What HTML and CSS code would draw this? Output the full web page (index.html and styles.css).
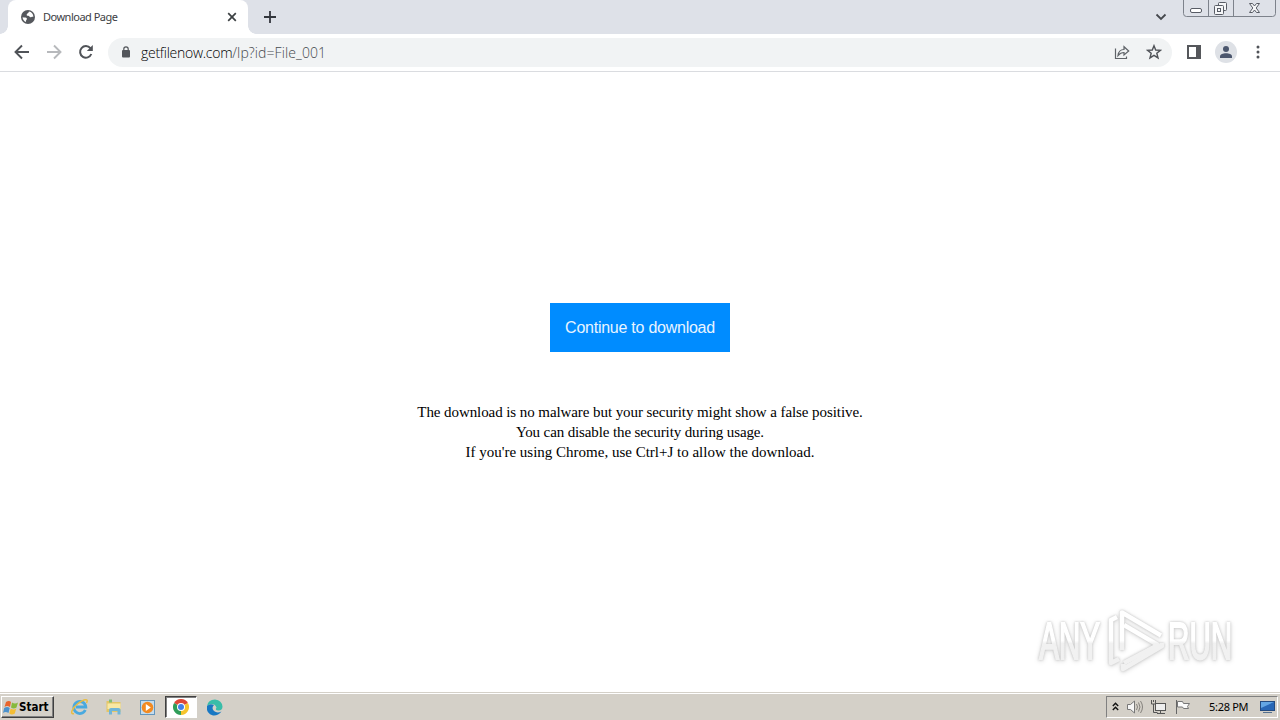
FILE: index.html
```
<!DOCTYPE html>
<html lang="en">
<head>
    <meta charset="UTF-8">
    <meta name="viewport" content="width=device-width, initial-scale=1.0">
    <title>Download Page</title>
    <link rel="stylesheet" href="styles.css">
</head>
<body>
    <!-- tabs -->
    <div class="tabstrip">
        <div class="tab">
            <svg class="globe" width="14" height="14" viewBox="0 0 14 14">
                <circle cx="7" cy="7" r="7" fill="#55585d"/>
                <path d="M8 1.6C7.5 3.5 6.5 3.2 5.8 4.2c-.4 1 .2 1.5 1.4 1.6 1.500 0 1 1.500 2.400 1.500.8 0 1.200-.9 2.800-.6C12.300 4 10.500 2 8 1.600zM1.600 7.200c1.900.3 3.800-.1 4.300 1.400.3 1.300-1.100 1.200-1 3.300C3 11.200 1.600 9.300 1.600 7.200z" fill="#fff"/>
            </svg>
            <span class="tab-title">Download Page</span>
            <svg class="tab-close" width="10" height="10" viewBox="0 0 10 10"><path d="M1.200 1.200l7.600 7.600M8.800 1.200L1.200 8.800" stroke="#3c4043" stroke-width="1.700"/></svg>
        </div>
        <svg class="new-tab" width="12" height="12" viewBox="0 0 12 12"><path d="M6 0v12M0 6h12" stroke="#33363d" stroke-width="1.800"/></svg>
        <svg class="tab-search" width="12" height="8" viewBox="0 0 12 8"><path d="M1.500 1.500L6 6l4.500-4.500" fill="none" stroke="#45484d" stroke-width="1.800"/></svg>
        <svg class="window-buttons" width="94" height="18" viewBox="0 0 94 18">
            <path d="M.5 0v13.500q0 3 3 3h86q3 0 3-3V0M25.500 0v16.500M50.500 0v16.500" fill="none" stroke="#7d828b"/>
            <rect x="7.500" y="8.500" width="11" height="4" rx="1.500" fill="#fff" stroke="#585c65"/>
            <g fill="#f5f6f8" stroke="#585c65">
                <rect x="35.500" y="2.500" width="8" height="8" rx="1"/>
                <rect x="31.500" y="5.500" width="9" height="9" rx="1"/>
                <rect x="34.500" y="8.500" width="3" height="3"/>
                <path d="M66.500 3.500h3l2 2.500 2-2.500h3l-3.300 4.500 3.300 4.500h-3l-2-2.500-2 2.500h-3L69.800 8z"/>
            </g>
        </svg>
    </div>

    <!-- toolbar -->
    <div class="toolbar">
        <svg class="nav-icon" width="16" height="16" viewBox="0 0 16 16"><path d="M15 8H2M8 1.500L1.500 8 8 14.500" fill="none" stroke="#505358" stroke-width="1.900"/></svg>
        <svg class="nav-icon" width="16" height="16" viewBox="0 0 16 16"><path d="M1 8h13M8 1.500L14.500 8 8 14.500" fill="none" stroke="#b7b9bc" stroke-width="1.900"/></svg>
        <svg class="nav-icon" width="16" height="16" viewBox="0 0 16 16"><path d="M13.300 10A5.800 5.800 0 1 1 12.400 4.200L13.500 5.500" fill="none" stroke="#505358" stroke-width="2"/><path d="M14.800 1v6h-6z" fill="#505358"/></svg>
        <div class="omnibox">
            <svg class="lock" width="8" height="12" viewBox="0 0 8 12"><rect x="0" y="4" width="8" height="7.500" rx="1" fill="#53565b"/><path d="M1.800 5V3a2.200 2.200 0 0 1 4.400 0V5" fill="none" stroke="#53565b" stroke-width="1.200"/></svg>
            <span class="url">getfilenow.com<span class="url-path">/lp?id=File_001</span></span>
            <svg class="share" width="16" height="15" viewBox="0 0 16 15"><path d="M1.500 3.500v10h11V11.500M4 10.500c.5-4 2.500-6 6-6V1.700l4.700 4.300-4.700 4V7.500C7.500 7.500 5.500 8.700 4 10.500z" fill="none" stroke="#5f6368" stroke-width="1.200"/></svg>
            <svg class="star" width="16" height="16" viewBox="0 0 16 16"><path d="M8 1.700l1.700 4.300 4.700.3-3.600 3 1.200 4.600-4-2.600-4 2.600 1.200-4.600-3.600-3 4.700-.3z" fill="none" stroke="#505358" stroke-width="1.400"/></svg>
        </div>
        <svg class="side-panel" width="14" height="14" viewBox="0 0 14 14"><path d="M0 0h14v14H0zM2 2v10h7V2z" fill="#55575b" fill-rule="evenodd"/></svg>
        <svg class="profile" width="22" height="22" viewBox="0 0 22 22"><circle cx="11" cy="11" r="11" fill="#dee1e6"/><circle cx="11" cy="8" r="3" fill="#4b566d"/><path d="M5 17v-1.500c0-2 3-3.200 6-3.200s6 1.200 6 3.200V17z" fill="#4b566d"/></svg>
        <svg class="menu" width="4" height="14" viewBox="0 0 4 14"><g fill="#505358"><circle cx="2" cy="2" r="1.500"/><circle cx="2" cy="7" r="1.500"/><circle cx="2" cy="12" r="1.500"/></g></svg>
    </div>

    <div class="page">
        <a class="download-btn" href="#">Continue to download</a>
        <p class="note">
            <span class="line-1">The download is no malware but your security might show a false positive.</span><br>
            <span class="line-2">You can disable the security during usage.</span><br>
            <span class="line-3">If you're using Chrome, use Ctrl+J to allow the download.</span>
        </p>
    </div>

    <!-- watermark over the page -->
    <svg class="watermark" width="220" height="76" viewBox="0 0 220 76">
        <defs>
            <linearGradient id="fade" gradientUnits="userSpaceOnUse" x1="0" y1="0" x2="0" y2="76">
                <stop offset="0.48" stop-color="#fff"/>
                <stop offset="0.52" stop-color="#f1f1f1"/>
            </linearGradient>
        </defs>
        <g class="mark-text" transform="scale(.58 1)">
            <text x="16" y="55">ANY</text>
            <text x="238" y="55">RUN</text>
        </g>
        <g class="mark-logo">
            <path d="M92 46V8.500l39 23"/>
            <path d="M94 21l34 20-34 18"/>
            <path d="M87 13l-6 3v43l8-4"/>
            <path d="M132 39v3L93 65v-5"/>
        </g>
    </svg>

    <div class="taskbar">
        <div class="start">
            <svg width="16" height="15" viewBox="0 0 16 15">
                <path d="M3 2q3-2 5 0L7 7Q4 5 1.500 7z" fill="#e8642c"/>
                <path d="M9 2.500q3 2 6 0L13.500 7.500q-3 2-5.500 0z" fill="#86b93d"/>
                <path d="M1.200 8q3-2 5.500 0l-1.200 5q-3-2-5.500 0z" fill="#4b91cc"/>
                <path d="M7.700 8.500q3 2 5.500 0l-1.400 5q-3 2-5.500 0z" fill="#f4bd34"/>
            </svg>
            <span>Start</span>
        </div>
        <div class="quick">
            <svg width="18" height="18" viewBox="0 0 18 18">
                <path d="M14.300 12A6 6 0 1 1 14.800 9H5" fill="none" stroke="#49a9df" stroke-width="2.800"/>
                <path d="M3 15.500C-1.500 17 1 10 7 5.500S18 0 15.500 5" fill="none" stroke="#e9bd42" stroke-width="1.500"/>
            </svg>
        </div>
        <div class="quick">
            <svg width="18" height="18" viewBox="0 0 18 18">
                <path d="M1.500 3h5l1 1h8v10h-14z" fill="#e3c667"/>
                <path d="M4 1.500h3v3H4z" fill="#83bd75"/>
                <path d="M2.500 5.500h13V11h-13z" fill="#f8e8a4"/>
                <path d="M4 16.500V12q0-2 2-2h7.500q2 0 2 2v4.500h-3V13H7v3.500z" fill="#6fb5d8"/>
            </svg>
        </div>
        <div class="quick">
            <svg width="17" height="17" viewBox="0 0 17 17">
                <rect x="1.500" y="1.500" width="14" height="14" fill="#c5dced" stroke="#6396bd"/>
                <circle cx="8.500" cy="8.500" r="5.800" fill="#f28a22"/>
                <path d="M6.800 5l5 3.500-5 3.500z" fill="#fff"/>
            </svg>
        </div>
        <div class="quick running">
            <svg width="16" height="16" viewBox="0 0 16 16">
                <circle cx="8" cy="8" r="8" fill="#fff"/>
                <path d="M8 8L1.070 4A8 8 0 0 1 14.930 4z" fill="#de4837"/>
                <path d="M8 8l6.930-4A8 8 0 0 1 8 16z" fill="#f6c42d"/>
                <path d="M8 8v8A8 8 0 0 1 1.070 4z" fill="#2f9d59"/>
                <circle cx="8" cy="8" r="4" fill="#fff"/>
                <circle cx="8" cy="8" r="3" fill="#4280e8"/>
            </svg>
        </div>
        <div class="quick">
            <svg width="17" height="17" viewBox="0 0 17 17">
                <path d="M1 7Q2 .5 9 .5q7 1 7.500 7 0 4-4 4-4 0-2-3C9 4 4 4 1 7z" fill="#39bda9"/>
                <path d="M1 7q3-3 7-1-3 3 0 6 3 2.500 7.500.5Q12 17 7 16.500 0 15 1 7z" fill="#1878c3"/>
            </svg>
        </div>
        <div class="tray">
            <svg class="chevrons" width="7" height="9" viewBox="0 0 7 9"><path d="M.8 4l2.700-2.700L6.200 4M.8 8l2.700-2.700L6.200 8" fill="none" stroke="#111" stroke-width="1.400"/></svg>
            <svg width="18" height="16" viewBox="0 0 18 16"><path d="M1.500 5.500h3L8.500 2v12l-4-3.500h-3z" fill="#f7f7f7" stroke="#777"/><path d="M10.500 5q2 3 0 6M12.500 3.500q3 4.500 0 9M14.500 2q4 6 0 12" fill="none" stroke="#85827d"/></svg>
            <svg width="18" height="16" viewBox="0 0 18 16"><rect x="5.500" y="4.500" width="10" height="7" fill="#eee" stroke="#555"/><path d="M7 14.500h8M10.500 12v2" stroke="#555"/><path d="M1.500 1v4h4V1M3.500 1v2M3.500 5v8.500h4" fill="none" stroke="#555"/></svg>
            <svg width="18" height="16" viewBox="0 0 18 16"><path d="M2.500 1v14" stroke="#666"/><path d="M3.500 2.500h5l1 2h6l-2 3 1 2h-5l-1-1.500h-5z" fill="#fafafa" stroke="#777"/></svg>
            <span class="clock">5:28 PM</span>
            <svg class="desktop" width="17" height="14" viewBox="0 0 17 14"><rect x="1.500" y="1.500" width="14" height="9" fill="#2867b6" stroke="#244b80"/><path d="M2 2h13L2 8z" fill="#63a6e4"/><path d="M4 12.500h9" stroke="#55708e"/></svg>
        </div>
    </div>
</body>
</html>
```
FILE: styles.css
```
body {
    margin: 0;
    width: 1280px;
    height: 720px;
    overflow: hidden;
    display: flex;
    flex-direction: column;
    background: #fff;
}
svg {
    display: block;
    flex: none;
}
.tabstrip {
    height: 34px;
    display: flex;
    align-items: center;
    background: #dee1e8;
    padding-left: 8px;
}
.tab {
    position: relative;
    box-sizing: border-box;
    width: 240px;
    height: 34px;
    display: flex;
    align-items: center;
    padding: 0 11px 0 13px;
    background: #fff;
    border-radius: 8px 8px 0 0;
}
/* curved feet of the active tab */
.tab::before,
.tab::after {
    content: "";
    position: absolute;
    bottom: 0;
    width: 8px;
    height: 8px;
}
.tab::before {
    left: -8px;
    background: radial-gradient(circle at 0 0, #dee1e8 7.5px, #fff 8px);
}
.tab::after {
    right: -8px;
    background: radial-gradient(circle at 100% 0, #dee1e8 7.5px, #fff 8px);
}
.tab-title {
    flex: 1;
    margin: 0 0 2px 8px;
    font: 11px "Noto Sans", sans-serif;
    letter-spacing: -0.5px;
    color: #3c4043;
}
.new-tab {
    margin-left: 16px;
}
.tab-search {
    margin-left: auto;
}
.window-buttons {
    align-self: flex-start;
    margin: 0 3px 0 16px;
}
.toolbar {
    box-sizing: border-box;
    height: 38px;
    display: flex;
    align-items: center;
    padding: 0 20px 1px 14px;
    border-bottom: 1px solid #dadce0;
}
.nav-icon {
    margin-right: 16px;
}
.omnibox {
    box-sizing: border-box;
    width: 1064px;
    height: 29px;
    margin-left: -2px;
    padding: 0 10px 0 14px;
    display: flex;
    align-items: center;
    border-radius: 15px;
    background: #f1f3f4;
}
.url {
    flex: 1;
    margin-left: 11px;
    font: 300 14px "Open Sans", "Noto Sans", sans-serif;
    letter-spacing: -0.27px;
    color: #000;
}
.url-path {
    letter-spacing: 0.1px;
    color: #44484d;
}
.star {
    margin-left: 16px;
}
.side-panel {
    margin-left: 15px;
}
.profile {
    margin-left: 14px;
}
.menu {
    margin-left: auto;
}
.page {
    height: 620px;
    display: flex;
    flex-direction: column;
    align-items: center;
}
.download-btn {
    box-sizing: border-box;
    width: 180px;
    height: 49px;
    margin-top: 231px;
    background: #008cff;
    color: #e8f4ff;
    font: 16px/49px "Liberation Sans", Arial, sans-serif;
    letter-spacing: -0.25px;
    text-align: center;
    text-decoration: none;
    white-space: nowrap;
}
.note {
    margin: 50px 0 0;
    font: 15px/20px "Liberation Serif", "Times New Roman", serif;
    text-align: center;
    color: #000;
}
.line-1 {
    letter-spacing: -0.08px;
}
.line-2 {
    letter-spacing: -0.12px;
}
.watermark {
    position: absolute;
    left: 1030px;
    top: 604px;
    filter: drop-shadow(0 0 1px #c4c4c4) drop-shadow(0 1px 2px #ddd);
}
.mark-text {
    font: 51px "Liberation Sans", Arial, sans-serif;
    fill: url(#fade);
    stroke: url(#fade);
    stroke-width: 2;
}
.mark-logo {
    fill: none;
    stroke: url(#fade);
    stroke-width: 4.5;
    stroke-linejoin: round;
}
.taskbar {
    box-sizing: border-box;
    height: 28px;
    display: flex;
    align-items: center;
    padding: 1px 2px 0 1px;
    border-top: 1px solid #d4d0c8;
    box-shadow: inset 0 1px #fff;
    background: #d4d0c8;
}
.start {
    box-sizing: border-box;
    width: 53px;
    height: 22px;
    margin-right: 10px;
    padding-left: 1px;
    display: flex;
    align-items: center;
    border: 1px solid;
    border-color: #fff #404040 #404040 #fff;
    box-shadow: inset -1px -1px #808080;
    font: bold 11.5px "DejaVu Sans Condensed", "DejaVu Sans", sans-serif;
    color: #000;
}
.quick {
    box-sizing: border-box;
    width: 32px;
    height: 22px;
    margin-right: 1.7px;
    display: flex;
    align-items: center;
    justify-content: center;
}
.running {
    border: 1px solid;
    border-color: #404040 #fff #fff #404040;
    box-shadow: inset 1px 1px #808080;
    background: #fff;
}
.tray {
    box-sizing: border-box;
    width: 172px;
    height: 22px;
    margin-left: auto;
    padding: 0 1px 0 5px;
    display: flex;
    align-items: center;
    gap: 6px;
    border: 1px solid;
    border-color: #808080 #fff #fff #808080;
}
.chevrons {
    margin: 0 1px 2px 0;
}
.clock {
    flex: 1;
    margin: 0 0 1px 11px;
    font: 11px "Noto Sans", sans-serif;
    letter-spacing: -0.3px;
    white-space: nowrap;
    color: #000;
}
```
